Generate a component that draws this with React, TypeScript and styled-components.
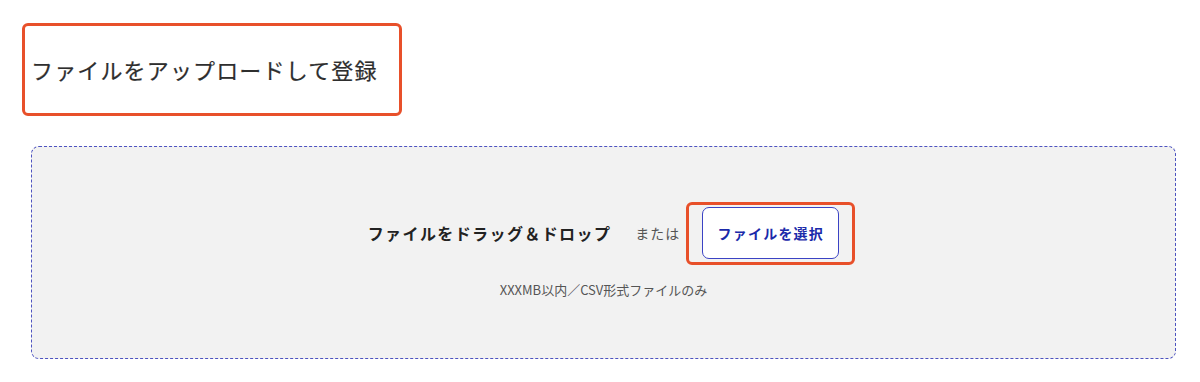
import React from "react";
import styled, { createGlobalStyle } from "styled-components";

const Global = createGlobalStyle`
  html, body { margin: 0; padding: 0; background: #ffffff; }
  body { font-family: "Noto Sans CJK JP", "Noto Sans", sans-serif; color: #333; }
`;

const Page = styled.div`
  width: 1200px;
  height: 382px;
  box-sizing: border-box;
  padding: 23px 24px 0 22px;
  display: flex;
  flex-direction: column;
`;

const TitleFrame = styled.div`
  width: 380px;
  height: 93px;
  box-sizing: border-box;
  border: 3px solid #e8502a;
  border-radius: 6px;
  display: flex;
  align-items: center;
  padding-left: 6px;
`;

const Title = styled.h1`
  margin: 0;
  font-size: 22px;
  font-weight: 400;
  letter-spacing: 1.15px;
  color: #2e2e2e;
  line-height: 1;
  transform: translateY(-1px);
  -webkit-text-stroke: 0.2px #2e2e2e;
`;

const DropZone = styled.div`
  margin: 30px 0 0 9px;
  width: 1145px;
  height: 213px;
  box-sizing: border-box;
  border: 1px dashed #4d53c0;
  border-radius: 8px;
  background: #f2f2f2;
  display: flex;
  flex-direction: column;
  align-items: center;
  justify-content: center;
  gap: 22px;
`;

const Row = styled.div`
  display: flex;
  align-items: center;
`;

const DragText = styled.span`
  font-size: 16px;
  font-weight: 700;
  letter-spacing: 1.4px;
  color: #222;
  margin-right: 24px;
`;

const OrText = styled.span`
  font-size: 14px;
  letter-spacing: 1px;
  color: #555;
  margin-right: 22px;
`;

const ButtonWrap = styled.div`
  position: relative;
  display: flex;
`;

const Highlight = styled.div`
  position: absolute;
  inset: -5px -16px -6px -16px;
  border: 3px solid #e8502a;
  border-radius: 6px;
  pointer-events: none;
`;

const SelectButton = styled.button`
  width: 137px;
  height: 52px;
  box-sizing: border-box;
  background: #ffffff;
  border: 1px solid #3b43c4;
  border-radius: 7px;
  font-family: "Noto Sans CJK JP", "Noto Sans", sans-serif;
  font-size: 14px;
  font-weight: 700;
  letter-spacing: 1.2px;
  color: #1b2aaa;
  cursor: pointer;
  padding: 0;
`;

const Note = styled.p`
  margin: 0;
  font-size: 13px;
  color: #555;
  line-height: 18px;
`;

export default function App() {
  return (
    <>
      <Global />
      <Page>
        <TitleFrame>
          <Title>ファイルをアップロードして登録</Title>
        </TitleFrame>
        <DropZone>
          <Row>
            <DragText>ファイルをドラッグ＆ドロップ</DragText>
            <OrText>または</OrText>
            <ButtonWrap>
              <SelectButton type="button">ファイルを選択</SelectButton>
              <Highlight />
            </ButtonWrap>
          </Row>
          <Note>XXXMB以内／CSV形式ファイルのみ</Note>
        </DropZone>
      </Page>
    </>
  );
}
